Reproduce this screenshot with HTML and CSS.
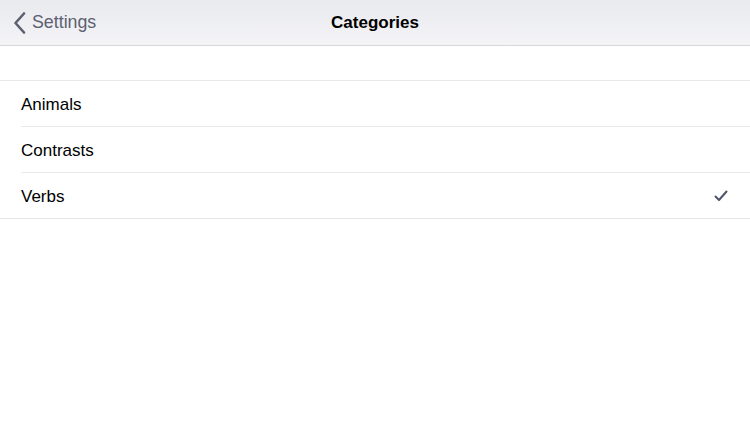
FILE: index.html
```html
<!DOCTYPE html>
<html lang="en">

<head>
    <meta charset="UTF-8">
    <meta name="viewport" content="width=device-width, initial-scale=1.0">
    <title>Categories</title>
    <link rel="stylesheet" href="styles.css">
</head>

<body>
    <div class="navbar">
        <div class="nav-back">
            <svg class="chevron" width="14" height="22" viewBox="0 0 14 22">
                <path d="M11 1.5 L2.5 11 L11 20.5" fill="none" stroke="#5c6070" stroke-width="2.6" stroke-linecap="round" stroke-linejoin="round"/>
            </svg>
            <span>Settings</span>
        </div>
        <div class="nav-title">Categories</div>
        <div class="nav-spacer"></div>
    </div>

    <div class="list">
        <div class="row">
            <span>Animals</span>
        </div>
        <div class="row">
            <span>Contrasts</span>
        </div>
        <div class="row">
            <span>Verbs</span>
            <svg class="check" width="14" height="12" viewBox="0 0 14 12">
                <path d="M1.5 6.5 L5 10 L12.5 1.5" fill="none" stroke="#50546a" stroke-width="2" stroke-linecap="round" stroke-linejoin="round"/>
            </svg>
        </div>
    </div>
</body>

</html>
```

FILE: styles.css
```css
body {
    margin: 0;
    padding: 0;
    font-family: "Liberation Sans", Arial, sans-serif;
    background-color: #ffffff;
    color: #000000;
}

.navbar {
    height: 45px;
    display: flex;
    align-items: center;
    justify-content: space-between;
    background: linear-gradient(#e9eaee, #f4f4f7);
    border-bottom: 1px solid #d9d9dd;
}

.nav-back {
    width: 140px;
    display: flex;
    align-items: center;
    gap: 5px;
    padding-left: 13px;
    color: #5c6070;
    font-size: 17.8px;
}

.nav-title {
    font-size: 17px;
    font-weight: bold;
}

.nav-spacer {
    width: 153px;
}

.list {
    margin-top: 34px;
    border-top: 1px solid #e9e9ec;
    border-bottom: 1px solid #e6e6e9;
}

.row {
    height: 45px;
    margin-left: 21px;
    padding-right: 21px;
    display: flex;
    align-items: center;
    justify-content: space-between;
    font-size: 17px;
    border-bottom: 1px solid #e9e9ec;
}

.row span {
    padding-top: 2px;
}

.row:last-child {
    border-bottom: none;
}

.check {
    margin-right: 1px;
}
```
